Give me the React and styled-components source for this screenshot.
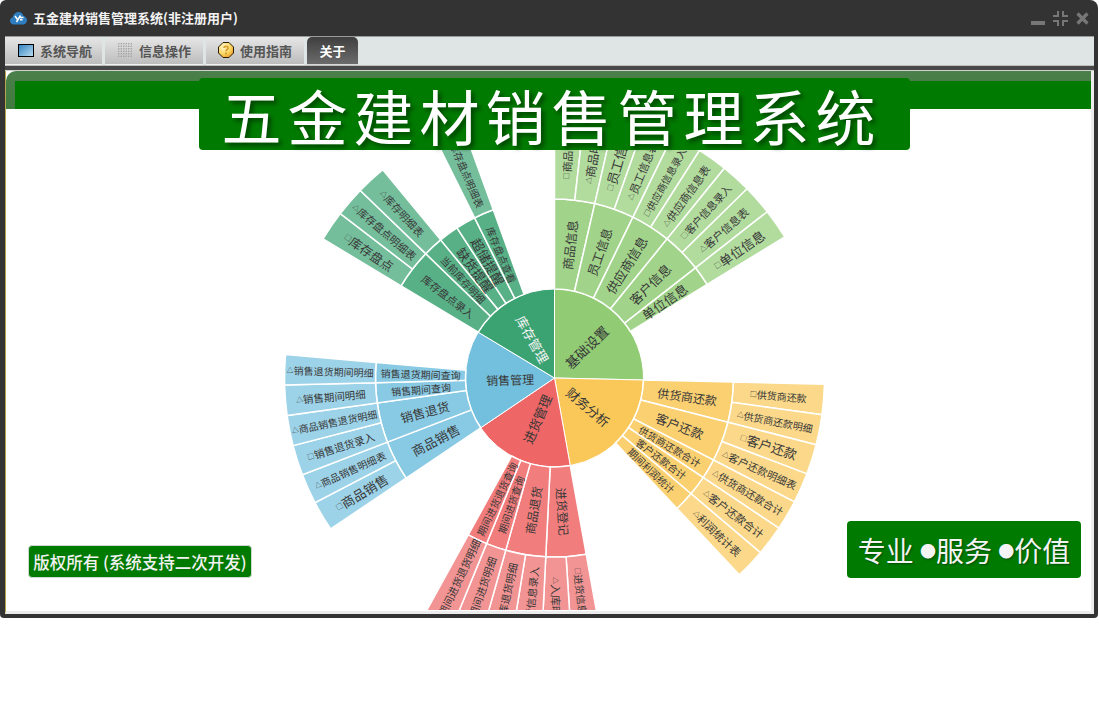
import React from "react";
import styled, { createGlobalStyle } from "styled-components";

const GlobalStyle = createGlobalStyle`
    html, body {
        margin: 0;
        padding: 0;
        background: #fff;
    }
    body {
        font-family: "Noto Sans CJK SC", "Liberation Sans", sans-serif;
    }
`;

const Window = styled.div`
    width: 1098px;
    height: 618px;
    box-sizing: border-box;
    background: #333;
    border-radius: 6px 8px 4px 4px;
    padding: 0 4px 4px 5px;
    display: flex;
    flex-direction: column;
    overflow: hidden;
`;

const TitleBar = styled.div`
    height: 36px;
    flex: none;
    display: flex;
    align-items: center;
    gap: 6px;
    padding: 0 5px 0 5px;
`;

const AppTitle = styled.div`
    flex: 1;
    color: #f2f2f2;
    font-size: 13px;
    font-weight: 700;
    line-height: 36px;
`;

const Controls = styled.div`
    display: flex;
    align-items: center;
    gap: 8px;
    padding-top: 1px;
`;

const TabBar = styled.div`
    height: 30px;
    flex: none;
    box-sizing: border-box;
    display: flex;
    gap: 3px;
    background: #dfe4e4;
    border-top: 1px solid #9a9a9a;
    border-bottom: 1px solid #bdbdbd;
`;

const Tab = styled.div`
    width: ${(p) => p.$width}px;
    box-sizing: border-box;
    height: 28px;
    display: flex;
    align-items: center;
    justify-content: ${(p) => (p.$active ? "center" : "flex-start")};
    gap: 6px;
    padding-left: ${(p) => (p.$active ? 0 : p.$pad)}px;
    padding-bottom: 1px;
    font-size: 13px;
    font-weight: 700;
    color: ${(p) => (p.$active ? "#fff" : "#555")};
    background: ${(p) =>
        p.$active
            ? "linear-gradient(#3f3f3f, #6b6b6b)"
            : "linear-gradient(#e6e6e6, #bcbcbc)"};
    border-bottom: 1px solid ${(p) => (p.$active ? "#d8d8d8" : "#f2f2f2")};
    border-radius: 5px 5px 0 0;
`;

const Rule = styled.div`
    height: 4px;
    flex: none;
    background: #484848;
    border-bottom: 1px solid #cfcfcf;
`;

const Content = styled.div`
    flex: 1;
    position: relative;
    background: #fff;
    border-left: 1px solid #b5a64a;
    border-right: 3px solid #ececec;
    border-bottom: 3px solid #ececec;
    display: flex;
    flex-direction: column;
    overflow: hidden;
`;

const HeaderBand = styled.div`
    height: 38px;
    flex: none;
    box-sizing: border-box;
    padding: 10px 0 0 9px;
    background: linear-gradient(#4b7f4b, #3f7a3f);
    border-radius: 10px 0 0 0;
    display: flex;
`;

const HeaderFill = styled.div`
    flex: 1;
    background: #007a00;
`;

const ChartArea = styled.div`
    flex: 1;
    min-height: 0;
    overflow: hidden;
`;

const ChartSvg = styled.svg`
    display: block;
`;

const Banner = styled.div`
    position: absolute;
    left: 193px;
    top: 7px;
    width: 711px;
    height: 72px;
    box-sizing: border-box;
    padding-right: 6px;
    background: #007a00;
    border-radius: 4px;
    display: flex;
    align-items: center;
    justify-content: center;
    color: #fff;
    font-size: 60px;
    letter-spacing: 6px;
    white-space: nowrap;
    text-shadow: 3px 3px 4px rgba(0, 0, 0, 0.45);
`;

const CopyBadge = styled.div`
    position: absolute;
    left: 22px;
    bottom: 33px;
    width: 224px;
    height: 33px;
    background: #007a00;
    border: 1px solid #cfd8cf;
    box-sizing: border-box;
    border-radius: 4px;
    display: flex;
    align-items: center;
    justify-content: center;
    color: #f2f2f2;
    font-size: 16.5px;
    font-weight: 500;
    white-space: nowrap;
`;

const SloganBadge = styled.div`
    position: absolute;
    right: 10px;
    bottom: 33px;
    width: 234px;
    height: 57px;
    background: #007a00;
    border-radius: 4px;
    display: flex;
    align-items: center;
    justify-content: center;
    color: #f4f4f4;
    font-size: 28px;
    white-space: pre;
    text-shadow: 1px 1px 2px rgba(0, 0, 0, 0.4);
`;

const Dot = styled.span`
    font-size: 16px;
`;

const Cx = 548.5;
const Cy = 269;
const R1 = 89;
const R2 = 179;
const R3 = 270;

function polar(r, deg) {
    const a = (deg * Math.PI) / 180;
    return [Cx + r * Math.sin(a), Cy - r * Math.cos(a)];
}

function sector(r0, r1, a0, a1) {
    const [x0, y0] = polar(r1, a0);
    const [x1, y1] = polar(r1, a1);
    const [x2, y2] = polar(r0, a1);
    const [x3, y3] = polar(r0, a0);
    const big = a1 - a0 > 180 ? 1 : 0;
    if (r0 === 0) {
        return `M${Cx} ${Cy}L${x0} ${y0}A${r1} ${r1} 0 ${big} 1 ${x1} ${y1}Z`;
    }
    return `M${x0} ${y0}A${r1} ${r1} 0 ${big} 1 ${x1} ${y1}L${x2} ${y2}A${r0} ${r0} 0 ${big} 0 ${x3} ${y3}Z`;
}

const groups = [
    {
        name: "基础设置", color: "#91cc75", a0: 0, a1: 91.3, size: 13.5,
        children: [
            { name: "商品信息", w: 2, size: 12.5, leaves: [["□", "商品信息", 11], ["△", "商品明细", 12]] },
            { name: "员工信息", w: 2, size: 12.5, leaves: [["□", "员工信息", 13], ["△", "员工信息表", 11]] },
            { name: "供应商信息", w: 2, size: 13, leaves: [["□", "供应商信息录入", 10], ["△", "供应商信息表", 11]] },
            { name: "客户信息", w: 2, size: 13, leaves: [["□", "客户信息录入", 10.5], ["△", "客户信息表", 11]] },
            { name: "单位信息", w: 1, size: 13, leaves: [["□", "单位信息", 13]] },
        ],
    },
    {
        name: "财务分析", color: "#fac858", a0: 91.3, a1: 169.8, size: 13,
        children: [
            { name: "供货商还款", w: 2, size: 12, leaves: [["□", "供货商还款", 10], ["△", "供货商还款明细", 10]] },
            { name: "客户还款", w: 2, size: 12.5, leaves: [["□", "客户还款", 13], ["△", "客户还款明细表", 10.5]] },
            { name: "供货商还款合计", w: 1, size: 10, leaves: [["△", "供货商还款合计", 10.5]] },
            { name: "客户还款合计", w: 1, size: 10, leaves: [["△", "客户还款合计", 11]] },
            { name: "期间利润统计", w: 1, size: 10, leaves: [["△", "利润统计表", 11]] },
        ],
    },
    {
        name: "进货管理", color: "#ee6666", a0: 169.8, a1: 236, size: 13,
        children: [
            { name: "进货登记", w: 2, size: 12, leaves: [["□", "进货信息录入", 10], ["△", "入库明细", 11]] },
            { name: "商品退货", w: 2, size: 12, leaves: [["□", "退货信息录入", 10.5], ["△", "入库退货明细", 10.5]] },
            { name: "期间进货查询", w: 1, size: 10, leaves: [["△", "期间进货明细", 10.5]] },
            { name: "期间进货退货查询", w: 1, size: 10, leaves: [["△", "期间进货退货明细", 10.5]] },
        ],
    },
    {
        name: "销售管理", color: "#73c0de", a0: 236, a1: 301, size: 12,
        children: [
            { name: "商品销售", w: 2, size: 13, leaves: [["□", "商品销售", 13], ["△", "商品销售明细表", 10]] },
            { name: "销售退货", w: 2, size: 12.5, leaves: [["□", "销售退货录入", 10.5], ["△", "商品销售退货明细", 10]] },
            { name: "销售期间查询", w: 1, size: 10, leaves: [["△", "销售期间明细", 10.5]] },
            { name: "销售退货期间查询", w: 1, size: 10, leaves: [["△", "销售退货期间明细", 10]] },
        ],
    },
    {
        name: "库存管理", color: "#3ba272", a0: 301, a1: 360, size: 13, light: true,
        children: [
            { name: "库存盘点录入", w: 2, size: 10.5, leaves: [["□", "库存盘点", 12.5], ["△", "库存盘点明细表", 10.5]] },
            { name: "当前库存明细", w: 1, size: 10, leaves: [["△", "库存明细表", 10.5]] },
            { name: "缺货提醒", w: 1, size: 13, leaves: [] },
            { name: "超储提醒", w: 1, size: 13, leaves: [] },
            { name: "库存盘点查看", w: 1, size: 10, leaves: [["△", "库存盘点明细表", 10]] },
        ],
    },
];

const LEAF = 6.5;

function Label({ r, a, size, fill = "#383838", mark, children }) {
    const [x, y] = polar(r, a);
    const rot = a < 180 ? a - 90 : a + 90;
    return (
        <text
            x={x}
            y={y}
            transform={`rotate(${rot} ${x} ${y})`}
            textAnchor="middle"
            dominantBaseline="central"
            fontSize={size}
            fill={fill}
            fontFamily={'"Noto Sans CJK SC", sans-serif'}
        >
            {mark ? <tspan fontSize={7}>{mark}</tspan> : null}
            {children}
        </text>
    );
}

function Sunburst() {
    const parts = [];
    const labels = [];
    groups.forEach((g) => {
        parts.push(
            <path key={g.name} d={sector(0, R1, g.a0, g.a1)} fill={g.color} stroke="#fff" strokeWidth="1" />
        );
        labels.push(
            <Label key={g.name} r={R1 / 2} a={(g.a0 + g.a1) / 2} size={g.size} fill={g.light ? "#f4f4f4" : "#383838"}>
                {g.name}
            </Label>
        );
        let a = g.a0;
        g.children.forEach((c) => {
            const end = a + c.w * LEAF;
            parts.push(
                <path key={g.name + c.name} d={sector(R1, R2, a, end)} fill={g.color} fillOpacity="0.85" stroke="#fff" strokeWidth="1.5" />
            );
            labels.push(
                <Label key={g.name + c.name} r={(R1 + R2) / 2} a={(a + end) / 2} size={c.size}>
                    {c.name}
                </Label>
            );
            c.leaves.forEach(([mark, text, size], i) => {
                const la = a + i * LEAF;
                parts.push(
                    <path key={c.name + text + i} d={sector(R2, R3, la, la + LEAF)} fill={g.color} fillOpacity="0.7" stroke="#fff" strokeWidth="1.5" />
                );
                labels.push(
                    <Label key={c.name + text + i} r={(R2 + R3) / 2} a={la + LEAF / 2} size={size} mark={mark}>
                        {text}
                    </Label>
                );
            });
            a = end;
        });
    });
    return (
        <ChartSvg width="1086" height="501" viewBox="0 0 1086 501">
            {parts}
            {labels}
        </ChartSvg>
    );
}

function AppIcon() {
    return (
        <svg width="17" height="14" viewBox="0 0 17 14">
            <path d="M4 13.5C1.5 13.5 0 11.8 0 9.8c0-1.8 1.2-3.2 2.8-3.5C3.2 3.6 5.4 1 8.5 1c2.8 0 4.6 1.8 5 4 1.8.3 3.5 2 3.5 4.2 0 2.4-1.9 4.3-4.3 4.3z" fill="#2f7fc0" />
            <path d="M5 5l2.5 3.5M10.5 4.5L6.5 11M10 6.5h3.5M10 8.8h2.5" stroke="#fff" strokeWidth="1.5" fill="none" />
        </svg>
    );
}

function NavIcon() {
    return (
        <svg width="16" height="13" viewBox="0 0 16 13">
            <defs>
                <linearGradient id="nav" x1="0" y1="0" x2="1" y2="1">
                    <stop offset="0" stopColor="#2d7fbf" />
                    <stop offset="1" stopColor="#bfe0f2" />
                </linearGradient>
            </defs>
            <rect x="0.5" y="0.5" width="15" height="12" fill="url(#nav)" stroke="#000" />
        </svg>
    );
}

function GridIcon() {
    const lines = [0, 1, 2, 3, 4, 5].map((i) => 1 + i * 2.5);
    return (
        <svg width="15" height="15" viewBox="0 0 15 15">
            {lines.map((v) => (
                <g key={v} stroke="#a0a0a0" strokeWidth="1">
                    <line x1={v} y1="0" x2={v} y2="15" strokeDasharray="1 1.5" />
                    <line x1="0" y1={v} x2="15" y2={v} strokeDasharray="1 1.5" />
                </g>
            ))}
        </svg>
    );
}

function HelpIcon() {
    return (
        <svg width="16" height="16" viewBox="0 0 16 16">
            <defs>
                <radialGradient id="help" cx="0.35" cy="0.3" r="0.8">
                    <stop offset="0" stopColor="#fff6c8" />
                    <stop offset="0.6" stopColor="#fbd560" />
                    <stop offset="1" stopColor="#e8901c" />
                </radialGradient>
            </defs>
            <path d="M5 .5h6L15.5 5v6L11 15.5H5L.5 11V5z" fill="url(#help)" stroke="#2a1d08" />
            <path d="M6 6c0-2 4-2.5 4 0 0 1.7-2 1.5-2 3.2" stroke="#d9a030" strokeWidth="1.8" fill="none" />
            <rect x="7" y="10.5" width="2" height="2" fill="#d9a030" />
        </svg>
    );
}

function WindowControls() {
    return (
        <Controls>
            <svg width="14" height="14" viewBox="0 0 14 14">
                <rect x="0" y="9" width="14" height="4" fill="#777" />
            </svg>
            <svg width="15" height="15" viewBox="0 0 15 15">
                <path d="M5 0v5H0M10 0v5h5M5 15v-5H0M10 15v-5h5" stroke="#777" strokeWidth="2" fill="none" />
            </svg>
            <svg width="13" height="13" viewBox="0 0 13 13">
                <path d="M1.5 1.5l10 10M11.5 1.5l-10 10" stroke="#777" strokeWidth="3.2" fill="none" />
            </svg>
        </Controls>
    );
}

export default function App() {
    return (
        <>
            <GlobalStyle />
            <Window>
                <TitleBar>
                    <AppIcon />
                    <AppTitle>五金建材销售管理系统(非注册用户)</AppTitle>
                    <WindowControls />
                </TitleBar>
                <TabBar>
                    <Tab $width={97} $pad={13}><NavIcon />系统导航</Tab>
                    <Tab $width={98} $pad={13}><GridIcon />信息操作</Tab>
                    <Tab $width={98} $pad={12}><HelpIcon />使用指南</Tab>
                    <Tab $width={51} $active>关于</Tab>
                </TabBar>
                <Rule />
                <Content>
                    <HeaderBand>
                        <HeaderFill />
                    </HeaderBand>
                    <ChartArea>
                        <Sunburst />
                    </ChartArea>
                    <Banner>五金建材销售管理系统</Banner>
                    <CopyBadge>版权所有 (系统支持二次开发)</CopyBadge>
                    <SloganBadge>专业 <Dot>●</Dot>服务 <Dot>●</Dot>价值</SloganBadge>
                </Content>
            </Window>
        </>
    );
}
